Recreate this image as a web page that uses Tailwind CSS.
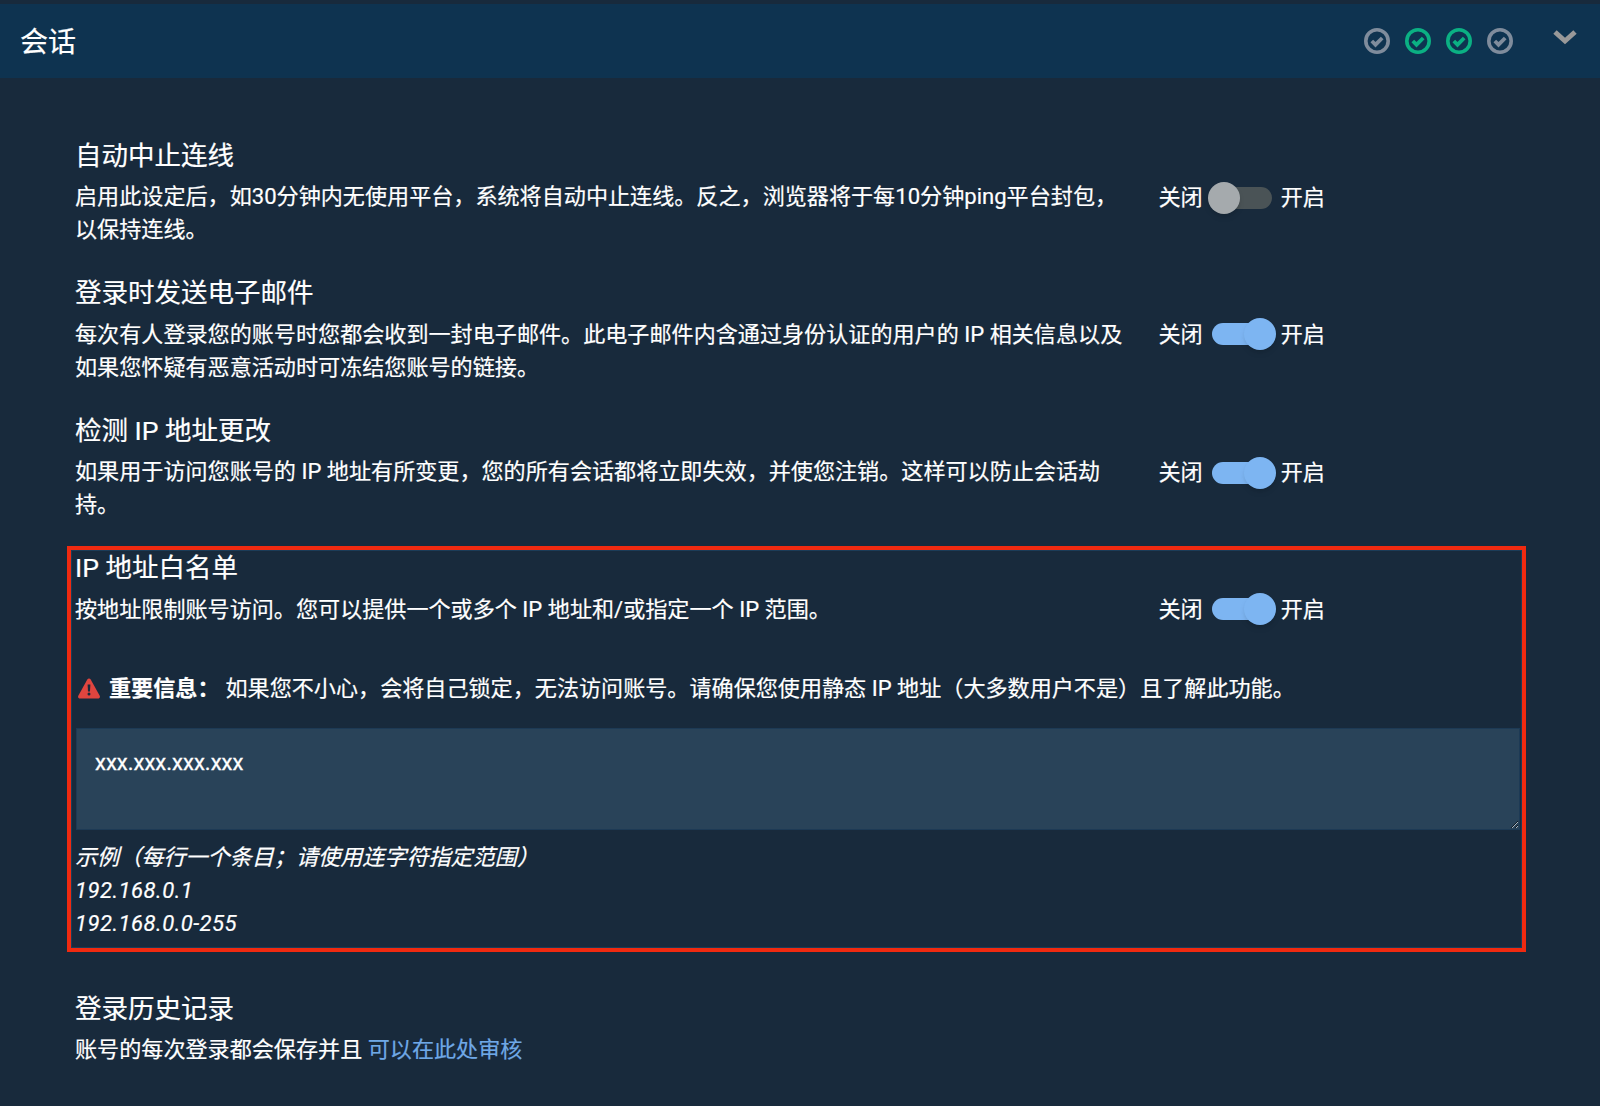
<!doctype html>
<html lang="zh-CN"><head><meta charset="utf-8"><script src="https://cdn.jsdelivr.net/npm/@tailwindcss/browser@4"></script></head>
<body class="m-0 bg-[#182a3c]">
<div class="w-[1600px] h-[1106px] overflow-hidden bg-[#182a3c] text-white text-[22.1px] leading-[33px] [-webkit-text-stroke-width:0.2px] font-['Roboto','Noto_Sans_CJK_SC',sans-serif] pt-1">
  <header class="h-[74px] bg-[#0e3350] flex items-center pl-[20px] pr-[20px]">
    <h1 class="text-[28px] leading-[74px] font-normal pt-[3px]">会话</h1>
    <div class="ml-auto flex items-center gap-[15px] mr-[67px]">
      <svg class="w-[26px] h-[26px] text-[#7f8c9c]" viewBox="0 0 26 26" fill="none" stroke="currentColor"><circle cx="13" cy="13" r="11.200" stroke-width="3.600"/><path d="M7.800 13l3.700 3.700 6.700-6.700" stroke-width="3.800"/></svg>
      <svg class="w-[26px] h-[26px] text-[#0bb083]" viewBox="0 0 26 26" fill="none" stroke="currentColor"><circle cx="13" cy="13" r="11.200" stroke-width="3.600"/><path d="M7.800 13l3.700 3.700 6.700-6.700" stroke-width="3.800"/></svg>
      <svg class="w-[26px] h-[26px] text-[#0bb083]" viewBox="0 0 26 26" fill="none" stroke="currentColor"><circle cx="13" cy="13" r="11.200" stroke-width="3.600"/><path d="M7.800 13l3.700 3.700 6.700-6.700" stroke-width="3.800"/></svg>
      <svg class="w-[26px] h-[26px] text-[#7f8c9c]" viewBox="0 0 26 26" fill="none" stroke="currentColor"><circle cx="13" cy="13" r="11.200" stroke-width="3.600"/><path d="M7.800 13l3.700 3.700 6.700-6.700" stroke-width="3.800"/></svg>
    </div>
    <svg class="absolute left-[1553px] top-[29px] w-[24px] h-[16px] text-[#999999]" viewBox="0 0 24 16" fill="none" stroke="currentColor"><path d="M2 3l10 9 10-9" stroke-width="5"/></svg>
  </header>

  <main class="relative px-[75px] pt-[61px]">
    <section class="flex h-[137.5px]">
      <div class="w-[1050px]">
        <h2 class="text-[26.500px] leading-[33px] font-normal mb-[8px]">自动中止连线</h2>
        <p>启用此设定后，如30分钟内无使用平台，系统将自动中止连线。反之，浏览器将于每10分钟ping平台封包，<br>以保持连线。</p>
      </div>
      <div class="ml-[33.500px] mt-[42px] h-[33px] flex items-center">
        <span>关闭</span>
        <span class="relative ml-[9px] w-[60px] h-[22px] rounded-full bg-[#4a5356]"><span class="absolute left-[-4px] top-[-5px] w-8 h-8 rounded-full bg-[#a5aaad] shadow-md"></span></span>
        <span class="ml-[9px]">开启</span>
      </div>
    </section>
    <section class="flex h-[137.5px]">
      <div class="w-[1050px]">
        <h2 class="text-[26.500px] leading-[33px] font-normal -mt-px mb-[9px]">登录时发送电子邮件</h2>
        <p>每次有人登录您的账号时您都会收到一封电子邮件。此电子邮件内含通过身份认证的用户的 IP 相关信息以及<br>如果您怀疑有恶意活动时可冻结您账号的链接。</p>
      </div>
      <div class="ml-[33.500px] mt-[41px] h-[33px] flex items-center">
        <span>关闭</span>
        <span class="relative ml-[9px] w-[60px] h-[22px] rounded-full bg-[#7db5f2]"><span class="absolute right-[-4px] top-[-5px] w-8 h-8 rounded-full bg-[#7db5f2] shadow-md"></span></span>
        <span class="ml-[9px]">开启</span>
      </div>
    </section>
    <section class="flex h-[137.5px]">
      <div class="w-[1050px]">
        <h2 class="text-[26.500px] leading-[33px] font-normal mb-[8px]">检测 IP 地址更改</h2>
        <p>如果用于访问您账号的 IP 地址有所变更，您的所有会话都将立即失效，并使您注销。这样可以防止会话劫<br>持。</p>
      </div>
      <div class="ml-[33.500px] mt-[42px] h-[33px] flex items-center">
        <span>关闭</span>
        <span class="relative ml-[9px] w-[60px] h-[22px] rounded-full bg-[#7db5f2]"><span class="absolute right-[-4px] top-[-5px] w-8 h-8 rounded-full bg-[#7db5f2] shadow-md"></span></span>
        <span class="ml-[9px]">开启</span>
      </div>
    </section>
    <section class="relative h-[440px]">
      <div class="flex">
        <div class="w-[1050px]">
          <h2 class="text-[26.500px] leading-[33px] font-normal -mt-px mb-[9px]">IP 地址白名单</h2>
          <p>按地址限制账号访问。您可以提供一个或多个 IP 地址和/或指定一个 IP 范围。</p>
        </div>
        <div class="ml-[33.500px] mt-[41px] h-[33px] flex items-center">
          <span>关闭</span>
          <span class="relative ml-[9px] w-[60px] h-[22px] rounded-full bg-[#7db5f2]"><span class="absolute right-[-4px] top-[-5px] w-8 h-8 rounded-full bg-[#7db5f2] shadow-md"></span></span>
          <span class="ml-[9px]">开启</span>
        </div>
      </div>
      <p class="mt-[46px] flex items-center pl-[3px]">
        <svg class="w-[22px] h-[21px] mr-[9px] shrink-0" viewBox="0 0 22 21"><path d="M11 0.500c.7 0 1.300.4 1.700 1l9 16.200c.7 1.300-.2 2.800-1.700 2.800H2c-1.500 0-2.400-1.500-1.700-2.800l9-16.200c.4-.6 1-1 1.700-1z" fill="#e0453f"/><path d="M9.600 6.500h2.800l-.4 7h-2z" fill="#182a3c"/><circle cx="11" cy="16" r="1.500" fill="#182a3c"/></svg>
        <strong class="font-bold">重要信息：</strong><span class="ml-[6px]">如果您不小心，会将自己锁定，无法访问账号。请确保您使用静态 IP 地址（大多数用户不是）且了解此功能。</span>
      </p>
      <textarea class="block mt-[23px] ml-px w-[1444px] h-[102px] bg-[#294359] border border-[#1d3a55] px-[18px] py-[17px] text-[22px] leading-[33px] [-webkit-text-stroke-width:0.3px] text-white outline-none resize-y">xxx.xxx.xxx.xxx</textarea>
      <p class="mt-[11px] italic">示例（每行一个条目；请使用连字符指定范围）<br><span class="tracking-[0.45px]">192.168.0.1</span><br><span class="tracking-[0.45px]">192.168.0.0-255</span></p>
      <div class="absolute left-[-8px] top-[-6px] w-[1459px] h-[406px] border-4 border-[#f02a10] shadow-[inset_0_0_0_1px_#1b3c58] pointer-events-none"></div>
    </section>
    <section>
      <h2 class="text-[26.500px] leading-[33px] font-normal mb-[8px]">登录历史记录</h2>
      <p>账号的每次登录都会保存并且 <a class="text-[#6fa8e6]" href="#">可以在此处审核</a></p>
    </section>
  </main>
</div>
</body></html>
